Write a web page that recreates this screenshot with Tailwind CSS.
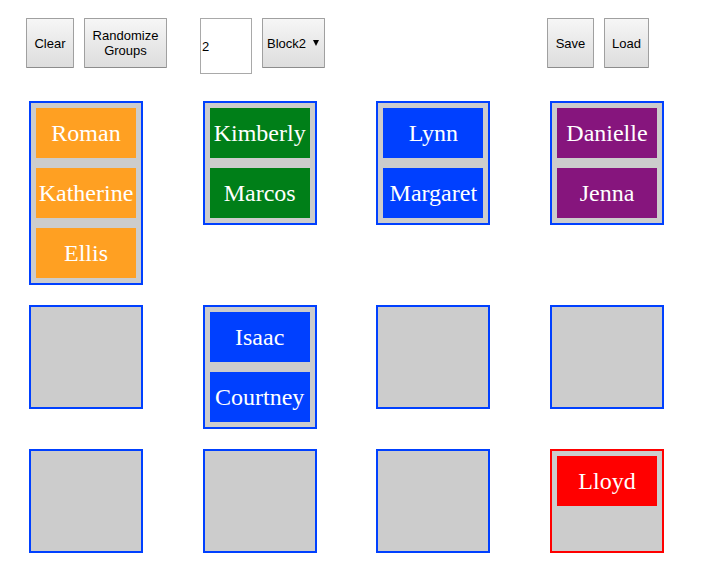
<!DOCTYPE html>
<html lang="en">
<head>
<meta charset="utf-8">
<meta name="viewport" content="width=device-width, initial-scale=1">
<title>Seating groups</title>
<script src="https://cdn.jsdelivr.net/npm/@tailwindcss/browser@4"></script>
</head>
<body class="bg-white font-['Liberation_Serif',serif]">
<header class="flex items-start justify-between pt-[18px] pl-[26px] pr-[54px] font-['Liberation_Sans',sans-serif] text-[13px] leading-[15px] text-black">
  <div class="flex items-start gap-[33px]">
    <div class="flex gap-[10px]">
      <button type="button" class="h-[50px] w-[48px] rounded-[1px] border border-[#a0a0a0] border-b-[#8c8c8c] bg-linear-to-b from-[#f6f6f6] to-[#dddddd]">Clear</button>
      <button type="button" class="h-[50px] w-[83px] rounded-[1px] border border-[#a0a0a0] border-b-[#8c8c8c] bg-linear-to-b from-[#f6f6f6] to-[#dddddd]">Randomize<br>Groups</button>
    </div>
    <div class="flex items-start gap-[10px]">
      <input type="text" value="2" aria-label="Group size" class="h-[56px] w-[52px] border border-[#a9a9a9] bg-white px-px">
      <div class="relative">
        <select aria-label="Block" class="h-[50px] w-[63px] appearance-none rounded-[1px] border border-[#a0a0a0] border-b-[#8c8c8c] bg-linear-to-b from-[#f6f6f6] to-[#dddddd] pl-[4px]">
          <option>Block2</option>
        </select>
        <svg class="pointer-events-none absolute top-[22px] right-[6px]" width="6" height="6" viewBox="0 0 6 6" aria-hidden="true"><path d="M0 0h6L3 6z" fill="#000"/></svg>
      </div>
    </div>
  </div>
  <div class="flex gap-[10px]">
    <button type="button" class="h-[50px] w-[47px] rounded-[1px] border border-[#a0a0a0] border-b-[#8c8c8c] bg-linear-to-b from-[#f6f6f6] to-[#dddddd]">Save</button>
    <button type="button" class="h-[50px] w-[45px] rounded-[1px] border border-[#a0a0a0] border-b-[#8c8c8c] bg-linear-to-b from-[#f6f6f6] to-[#dddddd]">Load</button>
  </div>
</header>
<main class="grid grid-cols-[repeat(4,114px)] items-start justify-between gap-y-[20px] pt-[27px] pr-[39px] pb-[29px] pl-[29px] text-center text-2xl leading-[50px] text-white">
  <section class="flex min-h-[104px] flex-col gap-[10px] border-2 border-[#0040ff] bg-[#cccccc] p-[5px]">
    <div class="h-[50px] bg-[#ffa022]">Roman</div>
    <div class="h-[50px] bg-[#ffa022]">Katherine</div>
    <div class="h-[50px] bg-[#ffa022]">Ellis</div>
  </section>
  <section class="flex min-h-[104px] flex-col gap-[10px] border-2 border-[#0040ff] bg-[#cccccc] p-[5px]">
    <div class="h-[50px] bg-[#007f18]">Kimberly</div>
    <div class="h-[50px] bg-[#007f18]">Marcos</div>
  </section>
  <section class="flex min-h-[104px] flex-col gap-[10px] border-2 border-[#0040ff] bg-[#cccccc] p-[5px]">
    <div class="h-[50px] bg-[#0040ff]">Lynn</div>
    <div class="h-[50px] bg-[#0040ff]">Margaret</div>
  </section>
  <section class="flex min-h-[104px] flex-col gap-[10px] border-2 border-[#0040ff] bg-[#cccccc] p-[5px]">
    <div class="h-[50px] bg-[#86157d]">Danielle</div>
    <div class="h-[50px] bg-[#86157d]">Jenna</div>
  </section>
  <section class="min-h-[104px] border-2 border-[#0040ff] bg-[#cccccc]"></section>
  <section class="flex min-h-[104px] flex-col gap-[10px] border-2 border-[#0040ff] bg-[#cccccc] p-[5px]">
    <div class="h-[50px] bg-[#0040ff]">Isaac</div>
    <div class="h-[50px] bg-[#0040ff]">Courtney</div>
  </section>
  <section class="min-h-[104px] border-2 border-[#0040ff] bg-[#cccccc]"></section>
  <section class="min-h-[104px] border-2 border-[#0040ff] bg-[#cccccc]"></section>
  <section class="min-h-[104px] border-2 border-[#0040ff] bg-[#cccccc]"></section>
  <section class="min-h-[104px] border-2 border-[#0040ff] bg-[#cccccc]"></section>
  <section class="min-h-[104px] border-2 border-[#0040ff] bg-[#cccccc]"></section>
  <section class="flex min-h-[104px] flex-col gap-[10px] border-2 border-[#ff0000] bg-[#cccccc] p-[5px]">
    <div class="h-[50px] bg-[#ff0000]">Lloyd</div>
  </section>
</main>
</body>
</html>
